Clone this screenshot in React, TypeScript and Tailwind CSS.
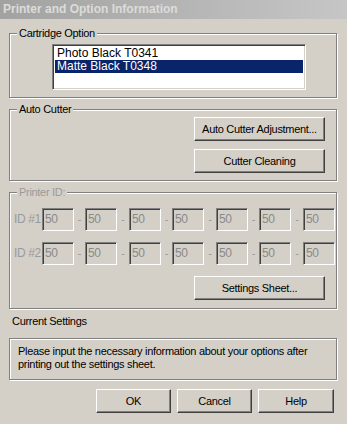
import React from 'react'

const raised =
  'border border-t-white border-l-white border-r-[#404040] border-b-[#404040] shadow-[inset_-1px_-1px_0_#808080] bg-[#d4d0c8]'
const sunken =
  'border border-t-[#808080] border-l-[#808080] border-r-white border-b-white shadow-[inset_1px_1px_0_#404040,inset_-1px_-1px_0_#d4d0c8]'
const etched =
  'relative border border-[#808080] shadow-[1px_1px_0_#fff,inset_1px_1px_0_#fff]'

const Button: React.FC<{ label: string; className?: string }> = ({ label, className }) => (
  <div className={`${raised} flex items-center justify-center h-[24px] ${className ?? ''}`}>
    <span>{label}</span>
  </div>
)

const GroupLabel: React.FC<{ text: string; disabled?: boolean }> = ({ text, disabled }) => (
  <span
    className={`absolute -top-[7px] left-[7px] px-[2px] leading-[13px] bg-[#d4d0c8] ${
      disabled ? 'text-[#9a9a9a]' : 'text-black'
    }`}
  >
    {text}
  </span>
)

const IdRow: React.FC<{ label: string }> = ({ label }) => {
  const dashes = ['w-[11px]', 'w-[12px]', 'w-[11px]', 'w-[12px]', 'w-[11px]', 'w-[12px]']
  return (
    <div className="flex items-center h-[23px]">
      <span className="w-[28px] shrink-0 whitespace-nowrap text-[#9a9a9a] text-[12px] tracking-[-0.4px]">{label}</span>
      {Array.from({ length: 7 }).map((_, i) => (
        <React.Fragment key={i}>
          <div className={`${sunken} w-[32px] h-[23px] shrink-0 flex items-center pl-[2px] text-[#8a8a8a] text-[12px]`}>50</div>
          {i < 6 && <span className={`${dashes[i]} shrink-0 text-center text-[#9a9a9a]`}>-</span>}
        </React.Fragment>
      ))}
    </div>
  )
}

export default function App() {
  return (
    <div className="w-[347px] h-[424px] bg-[#d4d0c8] flex flex-col font-['Liberation_Sans',Arial,sans-serif] text-[11px] leading-[13px] tracking-[-0.3px] text-black overflow-hidden">
      <div className="h-[19px] flex items-center pl-[3px] bg-gradient-to-r from-[#a2a2a2] to-[#c6c6c6]">
        <span className="font-bold text-[#dcdcd8] text-[12px] tracking-normal">Printer and Option Information</span>
      </div>

      <div className="px-[9px] flex flex-col">
        {/* Cartridge Option */}
        <div className={`${etched} mt-[14px] h-[65px] w-[328px]`}>
          <GroupLabel text="Cartridge Option" />
          <div className={`${sunken} bg-white ml-[42px] mt-[10px] w-[254px] h-[46px] p-[2px] text-[12px] tracking-normal`}>
            <div className="h-[13px] pl-[2px] flex items-center">Photo Black T0341</div>
            <div className="h-[13px] pl-[2px] flex items-center bg-[#0a246a] text-white">Matte Black T0348</div>
          </div>
        </div>

        {/* Auto Cutter */}
        <div className={`${etched} mt-[11px] h-[72px] w-[328px] flex flex-col items-end pt-[7px] pr-[11px] gap-[8px]`}>
          <GroupLabel text="Auto Cutter" />
          <Button label="Auto Cutter Adjustment..." className="w-[131px]" />
          <Button label="Cutter Cleaning" className="w-[131px]" />
        </div>

        {/* Printer ID */}
        <div className={`${etched} mt-[11px] h-[117px] w-[328px] flex flex-col pt-[15px] pl-[4px]`}>
          <GroupLabel text="Printer ID:" disabled />
          <IdRow label="ID #1" />
          <div className="mt-[11px]">
            <IdRow label="ID #2" />
          </div>
          <div className="mt-[11px] flex justify-end pr-[11px]">
            <Button label="Settings Sheet..." className="w-[131px]" />
          </div>
        </div>

        <div className="mt-[6px] pl-[3px]">Current Settings</div>

        <div className={`${etched} mt-[10px] h-[42px] w-[328px] pl-[8px] pt-[6px]`}>
          <p>Please input the necessary information about your options after</p>
          <p>printing out the settings sheet.</p>
        </div>

        <div className="mt-[9px] flex justify-end gap-[6px] pr-[4px]">
          <Button label="OK" className="w-[75px]" />
          <Button label="Cancel" className="w-[75px]" />
          <Button label="Help" className="w-[76px]" />
        </div>
      </div>
    </div>
  )
}
